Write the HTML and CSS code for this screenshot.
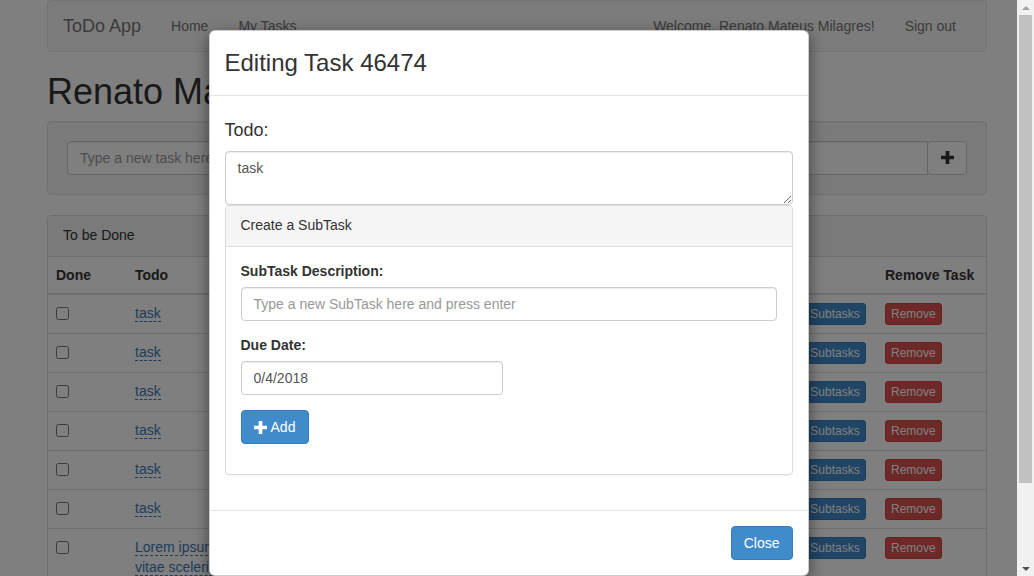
FILE: index.html
```html
<!DOCTYPE html>
<html lang="en">
<head>
<meta charset="utf-8">
<title>ToDo App</title>
<link rel="stylesheet" href="styles.css">
</head>
<body>
<div class="viewport">
  <div class="page">
    <nav class="navbar">
      <a class="brand">ToDo App</a>
      <ul class="nav">
        <li><a>Home</a></li>
        <li><a>My Tasks</a></li>
      </ul>
      <ul class="nav nav-right">
        <li><a>Welcome, Renato Mateus Milagres!</a></li>
        <li><a>Sign out</a></li>
      </ul>
    </nav>

    <h1 class="page-title">Renato Mateus Milagres</h1>

    <div class="well">
      <div class="input-group">
        <input class="form-control group-input" type="text" placeholder="Type a new task here and press enter">
        <button class="btn btn-default group-btn" type="button">
          <svg class="icon" viewBox="0 0 12 12" width="13" height="13"><path d="M4.3 0h3.4v4.3H12v3.4H7.7V12H4.3V7.7H0V4.3h4.3z" fill="currentColor"/></svg>
        </button>
      </div>
    </div>

    <div class="panel">
      <div class="panel-heading">To be Done</div>
      <table class="table">
        <colgroup>
          <col class="c-done"><col><col class="c-date"><col class="c-sub"><col class="c-rem">
        </colgroup>
        <thead>
          <tr><th>Done</th><th>Todo</th><th>Due Date</th><th></th><th>Remove Task</th></tr>
        </thead>
        <tbody>
          <tr><td><input type="checkbox"></td><td><a class="editable">task</a></td><td>04/01/2018</td><td><button class="btn btn-xs btn-primary">&#9776; Subtasks</button></td><td><button class="btn btn-xs btn-danger">Remove</button></td></tr>
          <tr><td><input type="checkbox"></td><td><a class="editable">task</a></td><td>04/01/2018</td><td><button class="btn btn-xs btn-primary">&#9776; Subtasks</button></td><td><button class="btn btn-xs btn-danger">Remove</button></td></tr>
          <tr><td><input type="checkbox"></td><td><a class="editable">task</a></td><td>04/01/2018</td><td><button class="btn btn-xs btn-primary">&#9776; Subtasks</button></td><td><button class="btn btn-xs btn-danger">Remove</button></td></tr>
          <tr><td><input type="checkbox"></td><td><a class="editable">task</a></td><td>04/01/2018</td><td><button class="btn btn-xs btn-primary">&#9776; Subtasks</button></td><td><button class="btn btn-xs btn-danger">Remove</button></td></tr>
          <tr><td><input type="checkbox"></td><td><a class="editable">task</a></td><td>04/01/2018</td><td><button class="btn btn-xs btn-primary">&#9776; Subtasks</button></td><td><button class="btn btn-xs btn-danger">Remove</button></td></tr>
          <tr><td><input type="checkbox"></td><td><a class="editable">task</a></td><td>04/01/2018</td><td><button class="btn btn-xs btn-primary">&#9776; Subtasks</button></td><td><button class="btn btn-xs btn-danger">Remove</button></td></tr>
          <tr><td><input type="checkbox"></td><td><a class="editable">Lorem ipsum dolor sit amet, consectetur adipiscing elit. Nullam<br>vitae scelerisque lorem.</a></td><td>04/01/2018</td><td><button class="btn btn-xs btn-primary">&#9776; Subtasks</button></td><td><button class="btn btn-xs btn-danger">Remove</button></td></tr>
        </tbody>
      </table>
    </div>
  </div>

  <div class="backdrop"></div>

  <div class="modal">
    <div class="modal-content">
      <div class="modal-header">
        <h3 class="modal-title">Editing Task 46474</h3>
      </div>
      <div class="modal-body">
        <h4 class="todo-label">Todo:</h4>
        <textarea class="form-control todo-text" rows="2">task</textarea>
        <div class="panel sub-panel">
          <div class="panel-heading">Create a SubTask</div>
          <div class="panel-body">
            <div class="form-group">
              <label class="label">SubTask Description:</label>
              <input class="form-control" type="text" placeholder="Type a new SubTask here and press enter">
            </div>
            <div class="form-group">
              <label class="label">Due Date:</label>
              <input class="form-control date-input" type="text" value="0/4/2018">
            </div>
            <div class="form-group">
              <button class="btn btn-primary add-btn" type="button">
                <svg class="icon" viewBox="0 0 12 12" width="13" height="13"><path d="M4.3 0h3.4v4.3H12v3.4H7.7V12H4.3V7.7H0V4.3h4.3z" fill="currentColor"/></svg>
                Add
              </button>
            </div>
          </div>
        </div>
      </div>
      <div class="modal-footer">
        <button class="btn btn-primary" type="button">Close</button>
      </div>
    </div>
  </div>
</div>

<div class="scrollbar">
  <div class="sb-btn"><span class="arrow-up"></span></div>
  <div class="sb-thumb"></div>
  <div class="sb-space"></div>
  <div class="sb-btn"><span class="arrow-down"></span></div>
</div>
</body>
</html>
```

FILE: styles.css
```css
* { box-sizing: border-box; }

html, body {
  margin: 0;
  height: 576px;
  overflow: hidden;
}

body {
  display: flex;
  font-family: "Liberation Sans", Arial, Helvetica, sans-serif;
  font-size: 14px;
  line-height: 1.42857;
  color: #333;
  background: #fff;
}

.viewport {
  flex: 1;
  position: relative;
  overflow: hidden;
  height: 576px;
}

.page {
  width: 940px;
  margin-left: 47px;
}

/* navbar */
.navbar {
  display: flex;
  align-items: center;
  height: 52px;
  background: #f8f8f8;
  border: 1px solid #e7e7e7;
  border-radius: 4px;
  margin-bottom: 20px;
}
.brand {
  padding: 15px;
  font-size: 18px;
  line-height: 20px;
  color: #777;
}
.nav {
  display: flex;
  list-style: none;
  margin: 0;
  padding: 0;
}
.nav a {
  display: block;
  padding: 15px;
  line-height: 20px;
  color: #777;
}
.nav-right {
  margin-left: auto;
  margin-right: 15px;
}

.page-title {
  font-size: 36px;
  font-weight: 500;
  line-height: 1.1;
  margin: 20px 0 9px;
}

/* well */
.well {
  padding: 19px;
  background: #f5f5f5;
  border: 1px solid #e3e3e3;
  border-radius: 4px;
  box-shadow: inset 0 1px 1px rgba(0,0,0,.05);
  margin-bottom: 20px;
}
.input-group {
  display: flex;
}
.form-control {
  display: block;
  width: 100%;
  height: 34px;
  padding: 6px 12px;
  font-family: inherit;
  font-size: 14px;
  line-height: 20px;
  color: #555;
  background: #fff;
  border: 1px solid #ccc;
  border-radius: 4px;
  box-shadow: inset 0 1px 1px rgba(0,0,0,.075);
}
.form-control::placeholder { color: #999; }
.group-input {
  flex: 1;
  border-radius: 4px 0 0 4px;
}
.group-btn {
  border-radius: 0 4px 4px 0;
  margin-left: -1px;
  width: 40px;
}

/* buttons */
.btn {
  display: inline-flex;
  align-items: center;
  justify-content: center;
  gap: 4px;
  padding: 6px 12px;
  font-family: inherit;
  font-size: 14px;
  line-height: 20px;
  height: 34px;
  border: 1px solid transparent;
  border-radius: 4px;
  cursor: pointer;
}
.btn-default {
  background: #fff;
  border-color: #ccc;
  color: #333;
}
.btn-primary {
  background: #428bca;
  border-color: #357ebd;
  color: #fff;
}
.btn-danger {
  background: #d9534f;
  border-color: #d43f3a;
  color: #fff;
}
.btn-xs {
  height: 22px;
  padding: 1px 5px;
  font-size: 12px;
  line-height: 18px;
  border-radius: 3px;
}
.icon { display: block; }

/* panels */
.panel {
  background: #fff;
  border: 1px solid #ddd;
  border-radius: 4px;
  box-shadow: 0 1px 1px rgba(0,0,0,.05);
  margin-bottom: 20px;
}
.panel-heading {
  padding: 10px 15px;
  background: #f5f5f5;
  border-bottom: 1px solid #ddd;
  border-radius: 3px 3px 0 0;
  color: #333;
}
.panel-body {
  padding: 15px;
}

/* table */
.table {
  width: 100%;
  border-collapse: collapse;
  table-layout: fixed;
}
.c-done { width: 79px; }
.c-date { width: 180px; }
.c-sub { width: 95px; }
.c-rem { width: 109px; }
.table th {
  text-align: left;
  padding: 8px;
  line-height: 20px;
  border-bottom: 2px solid #ddd;
  vertical-align: bottom;
  white-space: nowrap;
}
.table td {
  padding: 8px;
  line-height: 20px;
  border-top: 1px solid #ddd;
  vertical-align: top;
}
.table tbody tr:first-child td { border-top: 0; }
.table input[type=checkbox] {
  margin: 4px 0 0;
  width: 13px;
  height: 13px;
  display: block;
}
.editable {
  color: #3a7ab8;
  border-bottom: 1px dashed #3a7ab8;
}

/* modal */
.backdrop {
  position: absolute;
  inset: 0;
  background: #000;
  opacity: .5;
}
.modal {
  position: absolute;
  inset: 0;
  display: flex;
  justify-content: center;
  align-items: flex-start;
  padding-top: 30px;
}
.modal-content {
  width: 600px;
  background: #fff;
  border: 1px solid rgba(0,0,0,.2);
  border-radius: 6px;
  box-shadow: 0 5px 15px rgba(0,0,0,.5);
}
.modal-header {
  padding: 15px;
  border-bottom: 1px solid #e5e5e5;
}
.modal-title {
  margin: 0;
  font-size: 24px;
  font-weight: 500;
  line-height: 1.42857;
}
.modal-body {
  padding: 15px;
}
.todo-label {
  margin: 10px 0;
  font-size: 18px;
  font-weight: 500;
  line-height: 1.1;
}
.todo-text {
  height: 54px;
  resize: both;
}
.sub-panel {
  margin-bottom: 20px;
}
.form-group {
  margin-bottom: 15px;
}
.label {
  display: block;
  font-weight: bold;
  margin-bottom: 5px;
}
.date-input {
  width: 262px;
}
.add-btn {
  width: 68px;
}
.modal-footer {
  padding: 15px;
  border-top: 1px solid #e5e5e5;
  display: flex;
  justify-content: flex-end;
}

/* scrollbar */
.scrollbar {
  width: 17px;
  height: 576px;
  background: #f1f1f1;
  display: flex;
  flex-direction: column;
}
.sb-btn {
  height: 15px;
  display: flex;
  align-items: center;
  justify-content: center;
  flex: none;
}
.arrow-up {
  width: 0; height: 0;
  border-left: 4px solid transparent;
  border-right: 4px solid transparent;
  border-bottom: 4px solid #a3a3a3;
}
.arrow-down {
  width: 0; height: 0;
  border-left: 4px solid transparent;
  border-right: 4px solid transparent;
  border-top: 4px solid #505050;
}
.sb-thumb {
  height: 468px;
  margin: 0 2px;
  background: #c1c1c1;
  flex: none;
}
.sb-space { flex: 1; }
```
